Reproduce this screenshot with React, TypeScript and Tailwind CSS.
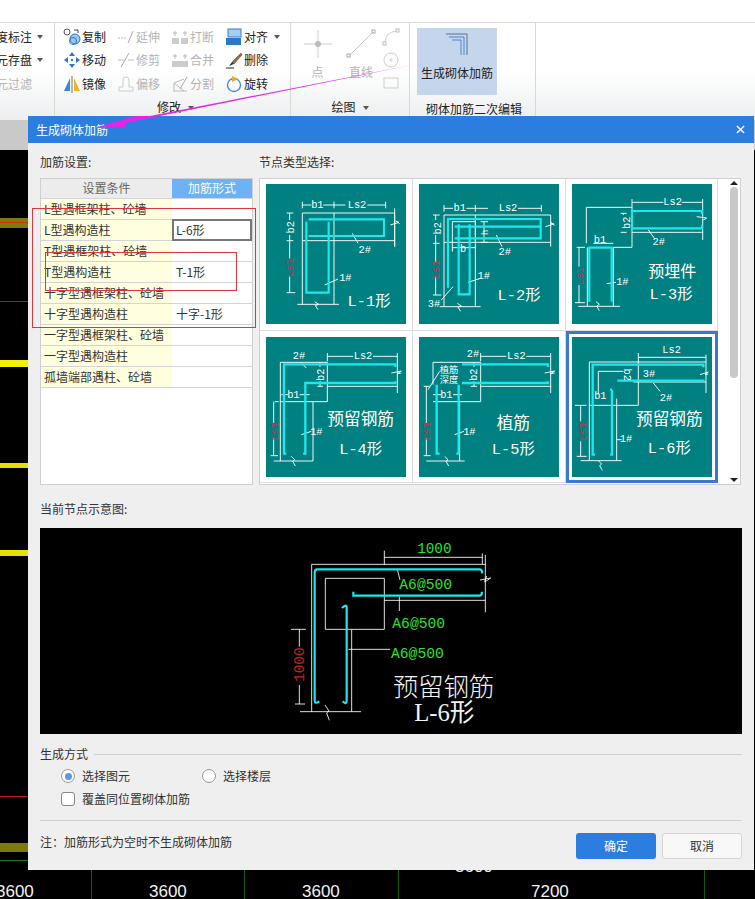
import React from "react";

const FONT = '"Noto Sans CJK SC","Liberation Sans",sans-serif';
const MONO = '"Liberation Mono","Noto Sans CJK SC",monospace';
const CY = "#1fe8ec";

function T({ x, y, s = 31, c = "#fff", r, a = "middle", children }: { x: number; y: number; s?: number; c?: string; r?: number; a?: "middle" | "start"; children: React.ReactNode }) {
  return (
    <text x={x} y={y} fontSize={s} fill={c} textAnchor={a} fontFamily={MONO} transform={r ? `rotate(${r} ${x} ${y})` : undefined}>
      {children}
    </text>
  );
}

function Thumb({ vb, white, cyan, cw = 6.5, children }: { vb: string; white: string; cyan: string; cw?: number; children: React.ReactNode }) {
  return (
    <svg viewBox={vb} className="w-[140px] h-[140px] bg-[#008080] block shrink-0">
      <path d={white} fill="none" stroke="#fff" strokeWidth="2.8" />
      <path d={cyan} fill="none" stroke={CY} strokeWidth={cw} />
      {children}
    </svg>
  );
}

const RED = "#c8304e";

const thumbs = [
  <Thumb key="1" vb="24 27 420 420"
    white="M133 90H160M196 90H262M328 90H383M133 80V100M228 80V100M383 80V100M133 114H410V215M133 197H410M133 114V388M228 114V388M118 388H243M170 380l12 8-10 4 8 12M397 150l26-8-10-4 12 8M410 100V215M95 114V135M95 180V250M86 114H106M86 197H106M95 305V353M86 353H112M283 175L300 205M200 330L240 312"
    cyan="M212 140V353H145V140M152 183H378V133H152">
    <T x={178} y={99}>b1</T><T x={297} y={99}>Ls2</T><T x={108} y={157} r={-90}>b2</T><T x={106} y={278} r={-90} c={RED}>Ls1</T><T x={320} y={233}>2#</T><T x={262} y={317}>1#</T>
    <T x={333} y={392} s={46}>L-1形</T>
  </Thumb>,
  <Thumb key="2" vb="483 27 420 420"
    white="M558 100H585M625 100H690M780 100H850M558 90V110M652 90V110M850 90V110M558 120H878V215M558 202H878M558 120V395M652 120V395M583 140H652V202M583 140V230M678 140V202M668 140H690M668 202H690M583 218H652M545 395H668M598 385l12 8-10 4 8 12M862 155l26-8-10-4 12 8M533 120V135M533 180V260M525 120H545M525 205H545M533 305V360M525 360H550M715 180L732 215M630 322L668 310M585 335L550 375"
    cyan="M635 148V358H602V148M590 155H848V190H590M848 155V132H570V338">
    <T x={605} y={109}>b1</T><T x={750} y={109}>Ls2</T><T x={548} y={160} r={-90}>b2</T><T x={543} y={283} r={-90} c={RED}>Ls1</T><T x={691} y={172} r={-90} s={26}>h</T><T x={615} y={232}>b</T><T x={740} y={241}>2#</T><T x={677} y={313}>1#</T><T x={528} y={397}>3#</T>
    <T x={783} y={374} s={46}>L-2形</T>
  </Thumb>,
  <Thumb key="3" vb="36 27 420 420"
    white="M216 82H310M365 82H428M216 72V98M428 72V195M79 97H216V217H160M79 97V205M216 172H430M50 217H75M57 217V275M57 330V383M45 383H75M55 394H180M82 217V394M160 217V394M108 380l10 8-8 5 8 14M410 125l30 4-10 6M265 165L285 192M140 326L168 322M190 115V120M182 115H200M182 172H200M100 205H160"
    cyan="M88 380V218H155V380M426 118V108H216V160H426V150">
    <T x={120} y={205}>b1</T><T x={338} y={91}>Ls2</T><T x={211} y={143} r={-90}>b2</T><T x={69} y={303} r={-90} c={RED}>Ls1</T><T x={296} y={209}>2#</T><T x={187} y={329}>1#</T>
    <T x={337} y={305} s={48}>预埋件</T><T x={333} y={373} s={46}>L-3形</T>
  </Thumb>,
  <Thumb key="4" vb="24 22 420 420"
    white="M208 80H285M345 80H418M208 70V95M418 70V190M67 98H208V216H67M67 98V394M165 216V394M47 394H165M100 380l10 10-6 5 8 14M400 130l30-6-12 8 12-2M208 170H420M186 98V112M186 155V170M178 170H195M50 216H62M47 216V280M47 325V378M38 378H60M130 100L145 115M130 315L160 305M70 195H90M125 195H155"
    cyan="M412 112V104H78V372H85M412 155V160H142V372H135" cw={7}>
    <T x={123} y={88}>2#</T><T x={315} y={89}>Ls2</T><T x={106} y={204}>b1</T><T x={197} y={135} r={-90}>b2</T><T x={59} y={305} r={-90} c={RED}>Ls1</T><T x={175} y={316}>1#</T>
    <T x={308} y={287} s={50}>预留钢筋</T><T x={308} y={372} s={46}>L-4形</T>
  </Thumb>,
  <Thumb key="5" vb="483 22 420 420"
    white="M668 80H745M805 80H878M668 70V95M878 70V190M525 98H668V216H525M525 98V165M605 216V394M505 394H620M560 380l10 10-6 5 8 14M860 130l30-6-12 8 12-2M668 170H880M648 98V112M648 155V170M638 170H657M505 170V280M505 325V378M497 378H518M497 170H515M510 180L545 125M590 315L618 305M525 195H550M585 195H612"
    cyan="M612 104H870V112M612 160H870V155M536 165V372H545M602 165V372H595" cw={7}>
    <T x={645} y={82}>2#</T><T x={775} y={89}>Ls2</T><T x={565} y={204}>b1</T><T x={657} y={135} r={-90}>b2</T><T x={517} y={305} r={-90} c={RED}>Ls1</T><T x={634} y={316}>1#</T><T x={573} y={129} s={28}>植筋</T><T x={573} y={161} s={28}>深度</T>
    <T x={766} y={297} s={50}>植筋</T><T x={766} y={372} s={46}>L-5形</T>
  </Thumb>,
  <Thumb key="6" vb="36 487 420 420"
    white="M235 535V692M235 548H438M438 540V655M88 562H438M88 562V858M235 692H88M115 590V660M115 590H190M220 622H438M62 858H185M170 672V858M115 858l10 10-6 5 8 14M420 600l25-8-10 8 10-2M62 692V740M62 800V845M45 692H80M50 845H80M280 625L300 650M170 795H185"
    cyan="M430 578V570H98V840H105M430 622V618H172M156 645V840H150M156 645H150" cw={7}>
    <T x={335} y={536}>Ls2</T><T x={193} y={600} r={90}>b2</T><T x={267} y={607}>3#</T><T x={318} y={679}>2#</T><T x={121} y={674}>b1</T><T x={77} y={770} r={-90} c={RED}>Ls1</T><T x={198} y={803}>1#</T>
    <T x={328} y={752} s={50}>预留钢筋</T><T x={328} y={836} s={46}>L-6形</T>
  </Thumb>,
];

const rows: [string, string][] = [
  ["L型遇框架柱、砼墙", ""],
  ["L型遇构造柱", "L-6形"],
  ["T型遇框架柱、砼墙", ""],
  ["T型遇构造柱", "T-1形"],
  ["十字型遇框架柱、砼墙", ""],
  ["十字型遇构造柱", "十字-1形"],
  ["一字型遇框架柱、砼墙", ""],
  ["一字型遇构造柱", ""],
  ["孤墙端部遇柱、砼墙", ""],
];

function Ico({ children }: { children: React.ReactNode }) {
  return <svg viewBox="0 0 18 18" className="w-[18px] h-[18px] shrink-0">{children}</svg>;
}

const ICONS: Record<string, React.ReactNode> = {
  copy: <Ico><circle cx="4" cy="4" r="3" fill="#fff" stroke="#555" /><circle cx="12" cy="11" r="5" fill="#9cc8ee" stroke="#2a78c8" /><circle cx="10" cy="13" r="3.5" fill="none" stroke="#2a78c8" /><path d="M11 2h4v3" fill="none" stroke="#444" /></Ico>,
  move: <Ico><path d="M9 1l3 4H6zM9 17l3-4H6zM1 9l4-3v6zM17 9l-4-3v6z" fill="#2a78c8" /><circle cx="9" cy="9" r="1.2" fill="#2a78c8" /></Ico>,
  mirror: <Ico><path d="M7 3v13H1z" fill="#3a86d8" /><path d="M11 3v13h6z" fill="#f2b227" /><path d="M9 1v17" stroke="#777" /></Ico>,
  extend: <Ico><path d="M1 10h9" stroke="#bbb" strokeDasharray="2 1" /><path d="M11 15L16 3" stroke="#aaa" /></Ico>,
  trim: <Ico><path d="M1 9h6M11 9h6" stroke="#bbb" /><path d="M4 16L12 2" stroke="#aaa" /></Ico>,
  offset: <Ico><path d="M6 12V5a3 3 0 016 0v7h4v4H2v-4z" fill="none" stroke="#ccc" /></Ico>,
  break: <Ico><path d="M1 10h7v6H1zM10 10h7v6h-7z" fill="#ccc" /><path d="M4 3v5M14 3v5M2 5h4M12 5h4" stroke="#bbb" /></Ico>,
  merge: <Ico><path d="M1 10h16v6H1z" fill="#ccc" /><path d="M4 3v5M14 3v5M2 5h4M12 5h4" stroke="#bbb" /></Ico>,
  split: <Ico><path d="M2 16h14M3 16V8l10 8M3 8l10-4" fill="none" stroke="#bbb" /><path d="M16 2L9 14" stroke="#aaa" /></Ico>,
  align: <Ico><rect x="3" y="1" width="13" height="8" fill="#a9cdf0" stroke="#3a7cc8" /><rect x="1" y="10" width="15" height="7" fill="#2a78c8" /></Ico>,
  del: <Ico><path d="M16 2L7 11l2 2 8-9z" fill="#9a6a3c" stroke="#6b4423" strokeWidth=".5" /><path d="M7 11l-3 4 5-2z" fill="#333" /><path d="M1 17h8" stroke="#222" /></Ico>,
  rotate: <Ico><circle cx="9" cy="10" r="6.5" fill="none" stroke="#3a86d8" strokeWidth="1.3" /><path d="M7 1l6 3-6 3z" fill="#f2a81f" /></Ico>,
};

function Tool({ icon, label, off, arrow }: { icon: string; label: string; off?: boolean; arrow?: boolean }) {
  return (
    <div className="h-[23.5px] flex items-center gap-[1px]">
      {ICONS[icon]}
      <span className={off ? "text-[#b4b4b4]" : "text-[#222]"}>{label}</span>
      {arrow && <span className="ml-[5px] border-x-[3px] border-x-transparent border-t-[4px] border-t-[#555]" />}
    </div>
  );
}

function Caret() {
  return <span className="inline-block ml-[7px] mb-[2px] border-x-[3.5px] border-x-transparent border-t-[4px] border-t-[#555]" />;
}

export default function App() {
  return (
    <div className="relative w-[755px] h-[899px] overflow-hidden bg-black flex flex-col text-[12px] leading-[18px]" style={{ fontFamily: FONT }}>
      {/* top bar */}
      <div className="h-[23px] shrink-0 bg-white border-b border-[#dcdcdc]" />
      {/* ribbon */}
      <div className="h-[97px] shrink-0 flex bg-gradient-to-b from-white from-50% to-[#eceeef]">
        <div className="w-[55px] shrink-0 border-r border-[#d8d8d8] overflow-hidden pt-[2px]">
          <div className="h-[23.5px] flex items-center justify-end pr-[11px] gap-[5px] text-[#222]"><span className="shrink-0">度标注</span><span className="border-x-[3px] border-x-transparent border-t-[4px] border-t-[#555]" /></div>
          <div className="h-[23.5px] flex items-center justify-end pr-[11px] gap-[5px] text-[#222]"><span className="shrink-0">元存盘</span><span className="border-x-[3px] border-x-transparent border-t-[4px] border-t-[#555]" /></div>
          <div className="h-[23.5px] flex items-center justify-end pr-[22px] text-[#b4b4b4]"><span className="shrink-0">元过滤</span></div>
        </div>
        <div className="w-[236px] shrink-0 border-r border-[#d8d8d8] pl-[8px] pt-[2px] relative">
          <div className="flex">
            <div className="w-[54px]"><Tool icon="copy" label="复制" /><Tool icon="move" label="移动" /><Tool icon="mirror" label="镜像" /></div>
            <div className="w-[54px]"><Tool icon="extend" label="延伸" off /><Tool icon="trim" label="修剪" off /><Tool icon="offset" label="偏移" off /></div>
            <div className="w-[54px]"><Tool icon="break" label="打断" off /><Tool icon="merge" label="合并" off /><Tool icon="split" label="分割" off /></div>
            <div><Tool icon="align" label="对齐" arrow /><Tool icon="del" label="删除" /><Tool icon="rotate" label="旋转" /></div>
          </div>
          <div className="text-center text-[#222] pr-[2px] mt-[2px]">修改<Caret /></div>
        </div>
        <div className="w-[119px] shrink-0 border-r border-[#d8d8d8] pt-[1px]">
          <div className="flex h-[71px]">
            <div className="w-[46px] pl-[7px] flex flex-col items-center text-[#b4b4b4]">
              <svg viewBox="0 0 30 30" className="w-[30px] h-[30px] mt-[5px] shrink-0"><path d="M1 15h28M15 1v28" stroke="#ccc" /><circle cx="15" cy="15" r="3" fill="#bbb" /></svg>
              <span className="mt-[4px]">点</span>
            </div>
            <div className="w-[38px] ml-[5px] flex flex-col items-center text-[#b4b4b4]">
              <svg viewBox="0 0 30 30" className="w-[30px] h-[30px] mt-[5px] shrink-0"><path d="M3 27L27 3" stroke="#ccc" /><rect x="1" y="25" width="3" height="3" fill="#fff" stroke="#aaa" /><rect x="26" y="1" width="3" height="3" fill="#fff" stroke="#aaa" /></svg>
              <span className="mt-[4px]">直线</span>
            </div>
            <div className="ml-[2px] flex flex-col text-[#b4b4b4]">
              <svg viewBox="0 0 18 18" className="w-[18px] h-[18px] mt-[4px]"><path d="M3 15Q3 4 15 3" fill="none" stroke="#ccc" /><rect x="1" y="14" width="3" height="3" fill="#fff" stroke="#bbb" /><rect x="14" y="1" width="3" height="3" fill="#fff" stroke="#bbb" /></svg>
              <svg viewBox="0 0 18 18" className="w-[18px] h-[18px] mt-[5px]"><circle cx="9" cy="9" r="7" fill="none" stroke="#ccc" /><rect x="8" y="8" width="2" height="2" fill="#fff" stroke="#bbb" strokeWidth=".6" /></svg>
              <svg viewBox="0 0 18 18" className="w-[18px] h-[18px] mt-[5px]"><rect x="2" y="4" width="14" height="10" fill="none" stroke="#ccc" /></svg>
            </div>
          </div>
          <div className="text-center text-[#222] mt-[3px]">绘图<Caret /></div>
        </div>
        <div className="w-[126px] shrink-0 border-r border-[#d8d8d8] pt-[5px] pl-[7px]">
          <div className="w-[80px] h-[67px] bg-[#c5d6ec] flex flex-col items-center">
            <svg viewBox="0 0 24 24" className="w-[24px] h-[24px] mt-[5px] shrink-0"><path d="M1 1h21v21" fill="none" stroke="#5c6f86" strokeWidth="1" /><path d="M4 4h15v18M7 7h9v15" fill="none" stroke="#4a86d0" strokeWidth="1" /></svg>
            <span className="text-[#222] mt-[7px]">生成砌体加筋</span>
          </div>
          <div className="text-[#222] ml-[3px] pl-[6px] mt-[5px]">砌体加筋二次编辑</div>
        </div>
      </div>

      {/* CAD canvas */}
      <div className="flex-1 relative bg-black">
        <div className="h-[30px] bg-[#c9c9c9]" />
        <div className="absolute left-0 top-[98px] w-[30px] h-[10px] bg-[#7f7a10]" />
        <div className="absolute left-0 top-[102px] w-[30px] h-px bg-[#e02a10]" />
        <div className="absolute left-0 top-[240px] w-[30px] h-[7px] bg-[#f5f000]" />
        <div className="absolute left-0 top-[181px] w-[30px] h-px bg-[#a81818]" />
        <div className="absolute left-0 top-[343px] w-[30px] h-[5px] bg-[#e6e000]" />
        <div className="absolute left-0 top-[430px] w-[30px] h-[6px] bg-[#e6e000]" />
        <div className="absolute left-0 top-[676px] w-[30px] h-px bg-[#c01818]" />
        <div className="absolute left-0 top-[723px] w-[30px] h-[9px] bg-[#7f7a10]" />
        <div className="absolute left-0 top-[740px] w-[30px] h-px bg-[#1a7a1a]" />
        {[91, 244, 398, 704].map((x) => (
          <div key={x} className="absolute top-[740px] w-px h-[39px] bg-[#145c14]" style={{ left: x }} />
        ))}
        {([[-4, 762, "3600"], [149, 762, "3600"], [302, 762, "3600"], [455, 737, "3600"], [531, 762, "7200"]] as [number, number, string][]).map(([x, y, t]) => (
          <span key={`${x}`} className="absolute text-[17px] leading-[20px] text-[#f2f2f2]" style={{ left: x, top: y, fontFamily: '"Liberation Sans",sans-serif' }}>{t}</span>
        ))}
      </div>

      {/* dialog */}
      <div className="absolute left-[28px] top-[116px] w-[726px] h-[754px] bg-[#efefef] flex flex-col">
        <div className="h-[27px] shrink-0 bg-[#2b7de0] flex items-center justify-between pl-[8px] pr-[9px] text-white">
          <span>生成砌体加筋</span>
          <svg viewBox="0 0 10 10" className="w-[9px] h-[9px]"><path d="M1 1l8 8M9 1l-8 8" stroke="#fff" strokeWidth="1.6" /></svg>
        </div>
        <div className="flex-1 px-[12px] text-[#333]">
          <div className="flex gap-[6px] mt-[10px]">
            <div className="w-[213px] shrink-0">
              <div className="h-[19px]">加筋设置:</div>
              <div className="mt-[6px] h-[307px] border border-[#cfcfcf] bg-white">
                <div className="h-[20px] flex text-center border-b border-[#d4d4d4]">
                  <div className="w-[131px] bg-[#ececec] text-[#666]">设置条件</div>
                  <div className="flex-1 bg-[#6db2f5] text-white">加筋形式</div>
                </div>
                {rows.map(([a, b]) => (
                  <div key={a} className="h-[21px] flex border-b border-[#d4d4d4] leading-[20px]">
                    <div className="w-[131px] shrink-0 bg-[#ffffe0] pl-[3px] whitespace-nowrap overflow-hidden">{a}</div>
                    {b === "L-6形" ? (
                      <div className="flex-1 bg-white border-2 border-[#777] pl-[2px] -my-px leading-[18px]">{b}</div>
                    ) : (
                      <div className="flex-1 bg-white pl-[4px]">{b}</div>
                    )}
                  </div>
                ))}
              </div>
            </div>
            <div className="flex-1 min-w-0">
              <div className="h-[19px]">节点类型选择:</div>
              <div className="mt-[6px] h-[307px] w-[482px] border border-[#cfcfcf] bg-white flex overflow-hidden">
                <div className="grid grid-cols-[153px_153px_152px] auto-rows-[152px] w-[469px] shrink-0">
                  {thumbs.map((t, i) => (
                    <div
                      key={i}
                      className={
                        i === 5
                          ? "flex items-center justify-center border-[3px] border-[#3a78d0] bg-white"
                          : i < 3
                            ? "flex items-center justify-center border-r border-b border-[#dcdcdc] pb-[1px]"
                            : "flex items-center justify-center border-r border-b border-[#dcdcdc]"
                      }
                    >
                      {t}
                    </div>
                  ))}
                </div>
                <div className="flex-1 flex flex-col items-center bg-white py-[2px] pr-[1px]">
                  <span className="border-x-[4px] border-x-transparent border-b-[4px] border-b-[#222]" />
                  <div className="w-[8px] h-[191px] mt-[2px] rounded bg-[#c8c8c8]" />
                  <div className="flex-1" />
                  <span className="border-x-[4px] border-x-transparent border-t-[4px] border-t-[#222]" />
                </div>
              </div>
            </div>
          </div>

          <div className="mt-[15px]">当前节点示意图:</div>
          <svg viewBox="-720 -6 2106 618" className="mt-[10px] w-[702px] h-[206px] bg-black block">
            <path
              d="M313 62V105M607 70V103M313 82H607M616 75V247M95 103H616M95 103V545M136 145H313V298H136ZM313 211H616M215 298V545M60 545H243M135 525l12 18-7 6 8 22M600 150l32-6-18 12 6-18M33 298H78M58 298V350M58 465V522M45 522H75M352 118L360 150M358 200V243M205 358H330"
              fill="none" stroke="#fff" strokeWidth="2.6"
            />
            <path
              d="M606 130Q608 118 598 118H112Q104 118 104 128V510Q104 524 118 514M220 185V197H598Q606 197 606 185M186 234Q200 220 200 234V510Q200 526 188 514"
              fill="none" stroke={CY} strokeWidth="6.5"
            />
            <text x="463" y="70" fontSize="43" fill="#2ee02e" textAnchor="middle" fontFamily={MONO}>1000</text>
            <text x="358" y="176" fontSize="44" fill="#2ee02e" fontFamily={MONO}>A6@500</text>
            <text x="337" y="295" fontSize="44" fill="#2ee02e" fontFamily={MONO}>A6@500</text>
            <text x="333" y="385" fontSize="44" fill="#2ee02e" fontFamily={MONO}>A6@500</text>
            <text x="72" y="404" fontSize="43" fill="#c82020" textAnchor="middle" fontFamily={MONO} transform="rotate(-90 72 404)">1000</text>
            <text x="491" y="497" fontSize="76" fill="#f2f2f2" textAnchor="middle" fontFamily={FONT} fontWeight="300">预留钢筋</text>
            <text x="493" y="572" fontSize="74" fill="#f2f2f2" textAnchor="middle" fontFamily={'"Liberation Serif","Noto Sans CJK SC",serif'}>L-6形</text>
          </svg>

          <div className="mt-[11px] flex items-center gap-[6px]">
            <span>生成方式</span>
            <div className="flex-1 h-px bg-[#cfcfcf]" />
          </div>
          <div className="mt-[4px] pl-[21px] flex items-center h-[18px]">
            <span className="w-[14px] h-[14px] rounded-full border border-[#999] bg-white flex items-center justify-center"><span className="w-[7px] h-[7px] rounded-full bg-[#5b96f0]" /></span>
            <span className="ml-[7px] w-[120px]">选择图元</span>
            <span className="w-[14px] h-[14px] rounded-full border border-[#999] bg-white" />
            <span className="ml-[7px]">选择楼层</span>
          </div>
          <div className="mt-[5px] pl-[21px] flex items-center h-[18px]">
            <span className="w-[14px] h-[14px] rounded-[3px] border border-[#888] bg-white" />
            <span className="ml-[7px]">覆盖同位置砌体加筋</span>
          </div>
          <div className="mt-[12px] h-px bg-[#cfcfcf]" />
          <div className="mt-[12px] flex items-center">
            <span className="flex-1 pb-[8px]">{"注\uFF1A加筋形式为空时不生成砌体加筋"}</span>
            <button className="w-[80px] h-[26px] rounded-[3px] bg-[#2b7de0] text-white">确定</button>
            <button className="ml-[6px] w-[80px] h-[26px] rounded-[3px] bg-[#f8f8f8] border border-[#d4d4d4] text-[#333]">取消</button>
          </div>
        </div>
      </div>

      {/* annotation overlays */}
      <div className="absolute left-[32px] top-[208px] w-[224px] h-[120px] border border-[#d9383c]" />
      <div className="absolute left-[45px] top-[252px] w-[192px] h-[39px] border border-[#d9383c]" />
      <svg viewBox="0 0 755 899" className="absolute inset-0 w-[755px] h-[899px] pointer-events-none">
        <path d="M417 64L150 116L135 116L95 128L125 127L125 123Z" fill="#e326e3" />
      </svg>
    </div>
  );
}
